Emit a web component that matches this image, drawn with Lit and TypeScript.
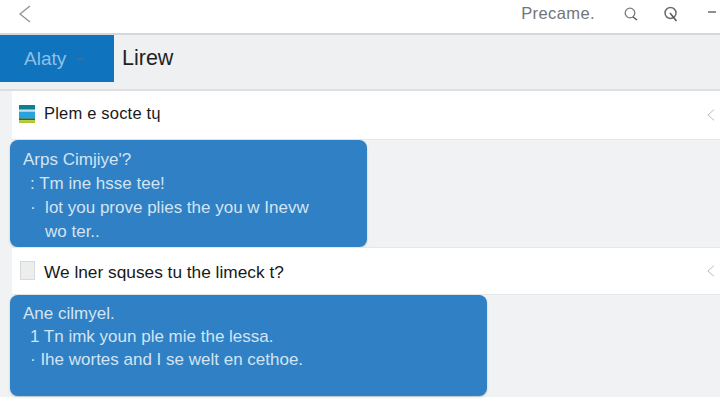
import { LitElement, html, css } from 'lit';
import { customElement } from 'lit/decorators.js';

const chevron = html`<svg class="chev" viewBox="0 0 12 18" fill="none"><path d="M10 2 L2 9 L10 16" stroke="#b4b8bb" stroke-width="1.2"/></svg>`;

@customElement('app-root')
export class AppRoot extends LitElement {
  static styles = css`
    :host {
      display: block;
      width: 720px;
      height: 400px;
      overflow: hidden;
      background: #fff;
      font-family: 'Liberation Sans', Arial, sans-serif;
      color: #1c1f22;
    }
    header {
      height: 35px;
      display: flex;
      align-items: center;
      box-sizing: border-box;
      padding: 0 0 6px 18px;
      background: #fff;
      border-bottom: 2px solid #d5d7d9;
    }
    .back {
      width: 14px;
      height: 20px;
    }
    .title {
      margin-left: auto;
      font-size: 16.5px;
      color: #70757a;
      letter-spacing: 0.4px;
    }
    .tool {
      width: 16px;
      height: 16px;
    }
    .tool.one {
      margin-left: 28px;
    }
    .tool.two {
      margin-left: 24px;
      margin-right: 41px;
    }
    .dash {
      width: 8px;
      height: 2px;
      background: #8b8f93;
      position: absolute;
      left: 708px;
      top: 11px;
    }
    .tabs {
      height: 56px;
      box-sizing: border-box;
      display: flex;
      background: #eef0f1;
      border-bottom: 2px solid #dcdee0;
    }
    .tab-active {
      width: 114px;
      height: 47px;
      box-sizing: border-box;
      padding-left: 24px;
      display: flex;
      align-items: center;
      gap: 12px;
      background: #0f73bd;
      color: #8fc0e6;
      font-size: 19px;
    }
    .tab-active i {
      width: 6px;
      height: 2px;
      background: #3d6f99;
    }
    .tab {
      margin-left: 8px;
      height: 47px;
      line-height: 46px;
      font-size: 21.5px;
      color: #1e2226;
    }
    main {
      background: #f0f2f3;
      height: 306px;
      padding-left: 12px;
      box-sizing: border-box;
    }
    .row {
      background: #fff;
      height: 49px;
      display: flex;
      align-items: center;
      padding: 0 3px 0 7px;
      font-size: 16.5px;
      letter-spacing: 0.2px;
      color: #17191c;
      border-bottom: 1px solid #e4e6e8;
      box-sizing: border-box;
    }
    .row.first span {
      padding-bottom: 3px;
    }
    .row.second {
      height: 48px;
      border-top: 1px solid #e4e6e8;
      font-size: 17.3px;
      letter-spacing: 0;
    }
    .row.second span {
      padding-top: 3px;
    }
    .stack {
      width: 16px;
      height: 18px;
      flex: none;
      margin: -3px 9px 0 0;
    }
    .row.second .check {
      width: 15px;
      height: 19px;
      flex: none;
      margin: -2px 9px 0 1px;
      padding: 0;
      background: #eceded;
      border: 1px solid #d8d9da;
      box-sizing: border-box;
    }
    .chev {
      width: 12px;
      height: 14px;
      margin-left: auto;
    }
    .bubble {
      margin-left: -2px;
      box-sizing: border-box;
      background: #2f80c4;
      border-radius: 8px;
      color: #d3e4f2;
      font-size: 17px;
      box-shadow: 0 1px 2px rgba(40, 70, 100, 0.3);
    }
    .bubble.a {
      width: 357px;
      height: 107px;
      padding: 8px 13px;
      line-height: 24px;
    }
    .bubble.b {
      width: 477px;
      height: 101px;
      padding: 7px 13px;
      line-height: 23px;
    }
    .bubble div {
      white-space: nowrap;
    }
    .li {
      padding-left: 7px;
    }
    .li2 {
      padding-left: 22px;
    }
  `;

  render() {
    return html`
      <header>
        <svg class="back" viewBox="0 0 14 20" fill="none"><path d="M12 2 L2 10 L12 18" stroke="#8e9296" stroke-width="1.3"/></svg>
        <span class="title">Precame.</span>
        <svg class="tool one" viewBox="0 0 16 16" fill="none"><circle cx="7" cy="7" r="4.8" stroke="#777b7f" stroke-width="1.3"/><path d="M10 11 L14 14" stroke="#555a5e" stroke-width="1.5"/></svg>
        <svg class="tool two" viewBox="0 0 16 16" fill="none"><circle cx="7.5" cy="7" r="5.5" stroke="#6a6e72" stroke-width="1.5"/><path d="M7 7 L13.5 15" stroke="#55595d" stroke-width="1.5"/></svg>
        <span class="dash"></span>
      </header>
      <div class="tabs">
        <div class="tab-active">Alaty <i></i></div>
        <div class="tab">Lirew</div>
      </div>
      <main>
        <div class="row first">
          <svg class="stack" viewBox="0 0 15 19" preserveAspectRatio="none">
            <rect y="0" width="15" height="5" fill="#0f7f94"/>
            <rect y="5" width="15" height="2" fill="#c8e4ec"/>
            <rect y="7" width="15" height="7" fill="#29a3dc"/>
            <rect y="14" width="15" height="2" fill="#1d6a52"/>
            <rect y="16" width="15" height="3" fill="#b6c92e"/>
          </svg>
          <span>Plem e socte tɥ</span>
          ${chevron}
        </div>
        <div class="bubble a">
          <div>Arps Cimjiye'?</div>
          <div class="li">: Tm ine hsse tee!</div>
          <div class="li">· &nbsp;lot you prove plies the you w Inevw</div>
          <div class="li2">wo ter..</div>
        </div>
        <div class="row second">
          <span class="check"></span>
          <span>We lner squses tu the limeck t?</span>
          ${chevron}
        </div>
        <div class="bubble b">
          <div>Ane cilmyel.</div>
          <div class="li">1 Tn imk youn ple mie the lessa.</div>
          <div class="li">· Ihe wortes and I se welt en cethoe.</div>
        </div>
      </main>
    `;
  }
}
